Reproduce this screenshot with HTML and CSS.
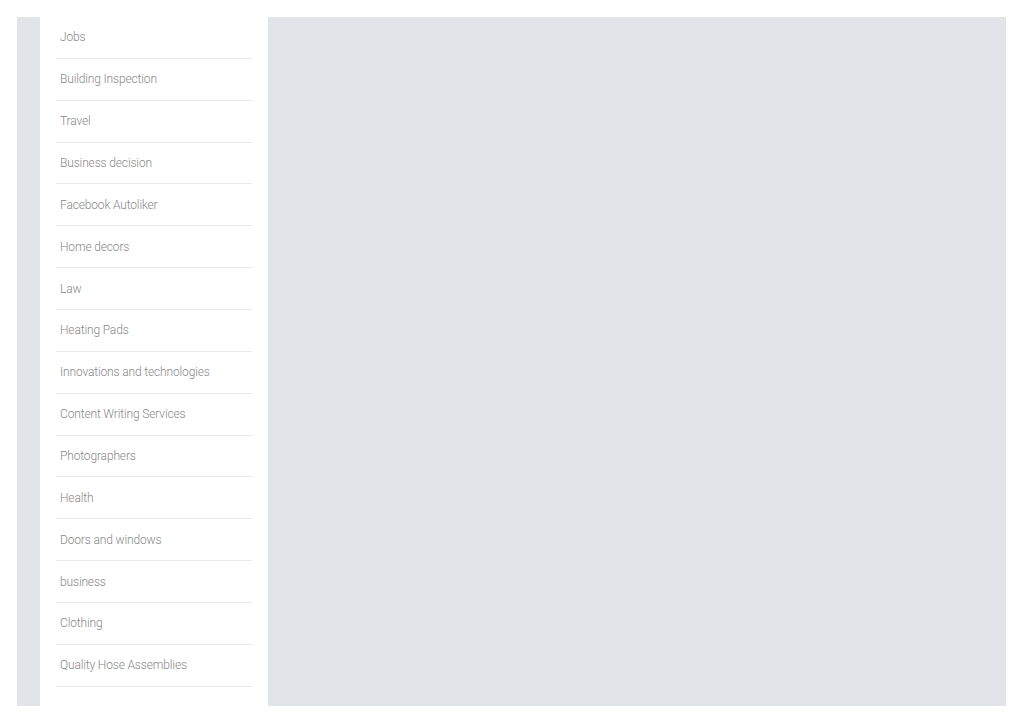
FILE: index.html
```html
<!DOCTYPE html>
<html lang="en">
<head>
    <meta charset="UTF-8">
    <meta name="viewport" content="width=device-width, initial-scale=1.0">
    <title>Categories</title>
    <link rel="stylesheet" href="styles.css">
</head>
<body>
    <div class="page">
        <aside class="sidebar">
            <ul class="cat-list">
                <li><a href="#">Jobs</a></li>
                <li><a href="#">Building Inspection</a></li>
                <li><a href="#">Travel</a></li>
                <li><a href="#">Business decision</a></li>
                <li><a href="#">Facebook Autoliker</a></li>
                <li><a href="#">Home decors</a></li>
                <li><a href="#">Law</a></li>
                <li><a href="#">Heating Pads</a></li>
                <li><a href="#">Innovations and technologies</a></li>
                <li><a href="#">Content Writing Services</a></li>
                <li><a href="#">Photographers</a></li>
                <li><a href="#">Health</a></li>
                <li><a href="#">Doors and windows</a></li>
                <li><a href="#">business</a></li>
                <li><a href="#">Clothing</a></li>
                <li><a href="#">Quality Hose Assemblies</a></li>
            </ul>
        </aside>
        <main class="content"></main>
    </div>
</body>
</html>
```

FILE: styles.css
```css
body {
    margin: 0;
    font-family: Roboto, "Liberation Sans", sans-serif;
    background: #fff;
}
.page {
    display: flex;
    width: 966px;
    height: 689px;
    margin: 17px;
    padding-left: 23px;
    background: #e1e4e8;
}
.sidebar {
    width: 196px;
    padding: 0 16px;
    background: #fff;
}
.cat-list {
    list-style: none;
    margin: 0;
    padding: 0;
}
.cat-list li {
    display: flex;
    align-items: center;
    height: 40.86px;
    padding-left: 4px;
    border-bottom: 1px solid #e9e9e9;
}
.cat-list a {
    color: #888;
    font-size: 12px;
    font-weight: 300;
    letter-spacing: -0.15px;
    text-decoration: none;
}
.content {
    flex: 1;
}
```
